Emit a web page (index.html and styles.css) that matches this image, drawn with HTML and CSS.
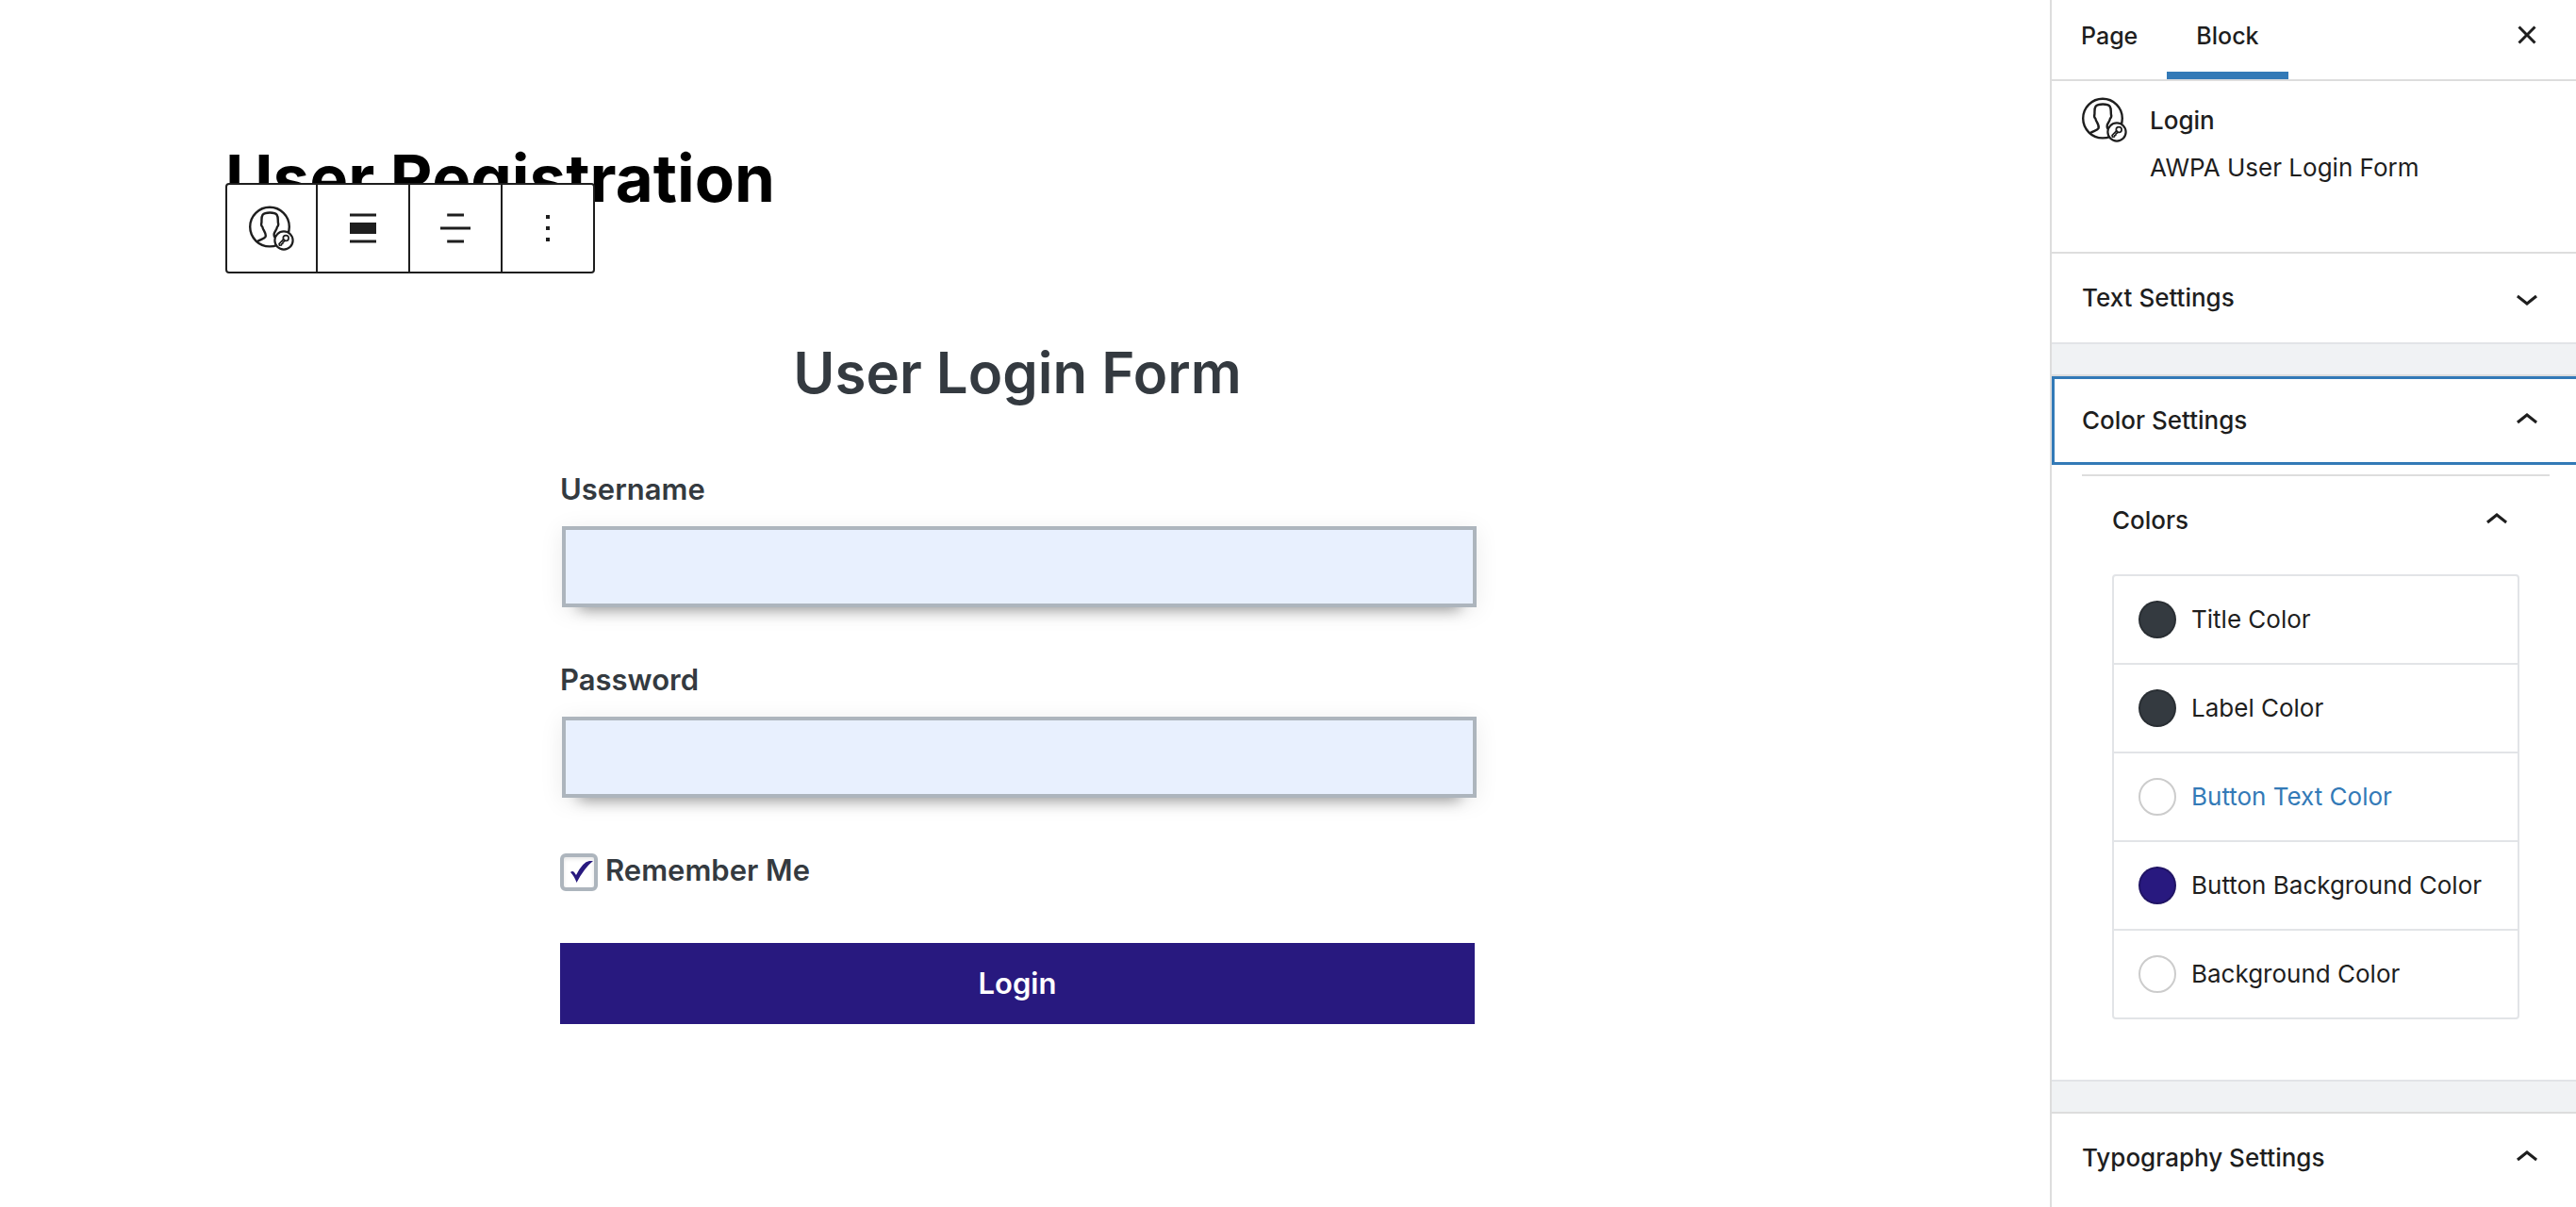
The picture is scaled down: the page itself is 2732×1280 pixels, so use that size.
FILE: index.html
```html
<!DOCTYPE html>
<html lang="en">
<head>
<meta charset="utf-8">
<title>User Registration</title>
<link rel="stylesheet" href="styles.css">
</head>
<body>
<svg class="sprite" aria-hidden="true">
  <symbol id="user-key" viewBox="0 0 48 48">
    <g fill="none" stroke="currentColor" stroke-linecap="round" stroke-linejoin="round">
      <circle cx="22" cy="22.600" r="20.800" stroke-width="2.400"/>
      <path stroke-width="2.400" d="M8.500 38.200C12.500 35.600 16.500 35.200 17.600 33C18.800 29.200 15 26.500 14.300 22.600C12.800 21.500 13 19.500 13.400 18.200C13.600 15 13 12 14.600 9.800C16.500 7.600 19.500 7.500 22.200 7.500C25 7.500 28 7.600 29.600 9.800C31.200 12 30.600 15 30.900 18.200C31.300 19.500 31.500 21.500 30 22.600C29.500 25.600 27.400 27.300 26.800 29.500C26.500 31 26.700 32.200 27.200 33"/>
      <circle cx="37" cy="37" r="9.600" fill="#fff" stroke-width="2.200"/>
      <circle cx="39.200" cy="34.600" r="2.900" stroke-width="1.700"/>
      <path stroke-width="1.600" d="M36.800 35.600L32 40.600L32.400 42.200L34.400 42L34.600 40.800L35.800 40.500L36 39.200L38.400 37.200"/>
    </g>
  </symbol>
  <symbol id="chevron-up" viewBox="0 0 24 24"><path d="M6.500 12.400L12 8l5.500 4.400-.9 1.200L12 10l-4.500 3.600-1-1.200z"/></symbol>
  <symbol id="chevron-down" viewBox="0 0 24 24"><path d="M17.500 11.600L12 16l-5.500-4.400.9-1.200L12 14l4.500-3.600 1 1.200z"/></symbol>
</svg>

<div class="editor">
  <main class="canvas">
    <div class="content">
      <h1 class="page-title">User Registration</h1>
      <div class="toolbar" role="toolbar" aria-label="Block tools">
        <button type="button" class="tool" aria-label="Login block"><svg class="icon"><use href="#user-key"/></svg></button>
        <button type="button" class="tool" aria-label="Align"><svg class="icon" viewBox="0 0 24 24"><path d="M5 15h14V9H5v6zm0 4.750h14v-1.500H5v1.500zM5 4.250v1.500h14v-1.500H5z"/></svg></button>
        <button type="button" class="tool" aria-label="Align text"><svg class="icon" viewBox="0 0 24 24"><path d="M16.500 4.250H7.600v1.500h8.900v-1.500zM4 11.250v1.500h16v-1.500H4zm3.600 8.500h8.900v-1.500H7.600v1.500z"/></svg></button>
        <button type="button" class="tool" aria-label="Options"><svg class="icon" viewBox="0 0 24 24"><path d="M13 19h-2v-2h2v2zm0-6h-2v-2h2v2zm0-6h-2V5h2v2z"/></svg></button>
      </div>

      <form class="login">
        <h2 class="login-title">User Login Form</h2>
        <div class="field">
          <label for="username">Username</label>
          <input id="username" type="text">
        </div>
        <div class="field">
          <label for="password">Password</label>
          <input id="password" type="password">
        </div>
        <div class="remember">
          <input id="remember" type="checkbox" checked>
          <label for="remember">Remember Me</label>
        </div>
        <button type="button" class="submit">Login</button>
      </form>
    </div>
  </main>

  <aside class="sidebar">
    <div class="tabs">
      <button type="button" class="tab">Page</button>
      <button type="button" class="tab tab-active">Block</button>
      <button type="button" class="close" aria-label="Close settings"><svg class="icon" viewBox="0 0 24 24"><path d="M12 13.060l3.712 3.713 1.061-1.060L13.061 12l3.712-3.712-1.060-1.060L12 10.938 8.288 7.227l-1.061 1.060L10.939 12l-3.712 3.712 1.060 1.061L12 13.061z"/></svg></button>
    </div>

    <div class="card">
      <svg class="icon"><use href="#user-key"/></svg>
      <div>
        <h2 class="card-title">Login</h2>
        <p class="card-text">AWPA User Login Form</p>
      </div>
    </div>

    <section class="panel">
      <button type="button" class="panel-toggle">Text Settings<svg class="icon"><use href="#chevron-down"/></svg></button>
    </section>

    <section class="panel">
      <button type="button" class="panel-toggle panel-focus">Color Settings<svg class="icon"><use href="#chevron-up"/></svg></button>
      <div class="panel-body">
        <button type="button" class="panel-toggle">Colors<svg class="icon"><use href="#chevron-up"/></svg></button>
        <ul class="colors">
          <li><button type="button" class="color"><span class="swatch swatch-dark"></span>Title Color</button></li>
          <li><button type="button" class="color"><span class="swatch swatch-dark"></span>Label Color</button></li>
          <li><button type="button" class="color color-hover"><span class="swatch"></span>Button Text Color</button></li>
          <li><button type="button" class="color"><span class="swatch swatch-indigo"></span>Button Background Color</button></li>
          <li><button type="button" class="color"><span class="swatch"></span>Background Color</button></li>
        </ul>
      </div>
    </section>

    <section class="panel">
      <button type="button" class="panel-toggle">Typography Settings<svg class="icon"><use href="#chevron-up"/></svg></button>
    </section>
  </aside>
</div>
</body>
</html>
```

FILE: styles.css
```css
:root {
  --ink: #1e1e1e;
  --slate: #343a40;
  --indigo: #28197f;
  --accent: #337ab7;
  --line: #ddd;
  --field-line: #adb5bd;
}

* {
  box-sizing: border-box;
}

body {
  margin: 0;
  background: #fff;
  color: var(--ink);
  font-family: Inter, "Liberation Sans", sans-serif;
  font-size: 26px;
  line-height: 36px;
}

h1,
h2,
p,
ul {
  margin: 0;
  padding: 0;
}

button {
  margin: 0;
  padding: 0;
  border: 0;
  background: none;
  color: inherit;
  font: inherit;
  cursor: pointer;
}

.sprite {
  display: none;
}

.icon {
  display: block;
  flex: none;
  width: 48px;
  height: 48px;
  fill: currentColor;
}

.editor {
  display: flex;
  min-height: 100vh;
}

/* Canvas */

.canvas {
  flex: 1;
  min-width: 0;
  padding: 145px 16px 0 0;
}

.content {
  position: relative;
  max-width: 1680px;
  margin: 0 auto;
}

.page-title {
  color: #000;
  font-size: 69px;
  font-weight: 700;
  line-height: 88px;
}

.toolbar {
  position: absolute;
  top: 49px;
  left: 0;
  display: flex;
  border: 2px solid var(--ink);
  border-radius: 4px;
  background: #fff;
}

.tool {
  display: flex;
  align-items: center;
  justify-content: center;
  width: 98px;
  height: 92px;
  border-left: 2px solid var(--ink);
}

.tool:first-child {
  width: 94px;
  border-left: 0;
}

.login {
  display: flex;
  flex-direction: column;
  max-width: 970px;
  margin: 122px auto 0;
  color: var(--slate);
  font-size: 31px;
  font-weight: 600;
  line-height: 48px;
}

.login-title {
  margin-bottom: 60px;
  font-size: 60px;
  font-weight: 600;
  line-height: 80px;
  text-align: center;
}

.field {
  display: flex;
  flex-direction: column;
  gap: 15px;
  margin-bottom: 53px;
}

.field input {
  height: 86px;
  margin: 0 -2px 0 2px;
  padding: 0 16px;
  border: 4px solid var(--field-line);
  border-radius: 0;
  background: #e8f0fe;
  box-shadow: 0 4px 24px rgba(0, 0, 0, 0.08), 0 20px 16px -18px rgba(0, 0, 0, 0.4);
  color: inherit;
  font: inherit;
}

.remember {
  display: flex;
  align-items: center;
  gap: 8px;
  margin-bottom: 53px;
}

.remember input {
  appearance: none;
  width: 40px;
  height: 40px;
  margin: 4px 0 0;
  border: 4px solid var(--field-line);
  border-radius: 6px;
  background: #fff;
  box-shadow: inset 0 2px 4px rgba(0, 0, 0, 0.1);
}

.remember input:checked::before {
  content: "";
  display: block;
  width: 32px;
  height: 32px;
  background: var(--indigo);
  clip-path: path("M7 16Q9 14 11 16L13 19Q20 5 27 4L31 4Q22 11 13.500 27Q11 20 7 16Z");
}

.submit {
  height: 86px;
  background: var(--indigo);
  color: #fff;
}

/* Sidebar */

.sidebar {
  flex: none;
  width: 558px;
  border-left: 2px solid var(--line);
}

.tabs {
  display: flex;
  height: 86px;
  border-bottom: 2px solid var(--line);
}

.tab {
  padding: 0 31px;
  border-bottom: 8px solid transparent;
  font-size: 25px;
  font-weight: 500;
}

.tab-active {
  border-bottom-color: var(--accent);
}

.close {
  align-self: flex-start;
  margin: 13px 28px 0 auto;
}

.card {
  display: flex;
  gap: 24px;
  padding: 17px 32px 71px;
}

.card-title {
  margin: 7px 0 14px;
  font-size: 26px;
  font-weight: 500;
}

.panel {
  border-top: 2px solid var(--line);
}

.panel + .panel {
  margin-top: 34px;
  box-shadow: 0 -32px #f0f2f4, 0 -34px #e2e4e7;
}

.panel-toggle {
  display: flex;
  align-items: center;
  justify-content: space-between;
  width: 100%;
  height: 94px;
  padding: 0 28px 0 32px;
  font-weight: 500;
  text-align: left;
}

.panel-focus {
  padding-left: 29px;
  border: 3px solid var(--accent);
  border-right: 0;
}

.panel-body {
  margin: 10px 28px 0 32px;
  padding-bottom: 64px;
  border-top: 2px solid var(--line);
}

.panel-body .panel-toggle {
  padding-right: 32px;
}

.colors {
  margin: 10px 32px 0;
  border: 2px solid #e2e4e7;
  border-radius: 4px;
  list-style: none;
}

.colors li + li {
  border-top: 2px solid #e2e4e7;
}

.color {
  display: flex;
  align-items: center;
  gap: 16px;
  width: 100%;
  height: 92px;
  padding: 0 26px;
  text-align: left;
  white-space: nowrap;
}

.color-hover {
  color: var(--accent);
}

.swatch {
  flex: none;
  width: 40px;
  height: 40px;
  border: 2px solid rgba(0, 0, 0, 0.2);
  border-radius: 50%;
}

.swatch-dark {
  background: var(--slate);
}

.swatch-indigo {
  background: var(--indigo);
}
```
